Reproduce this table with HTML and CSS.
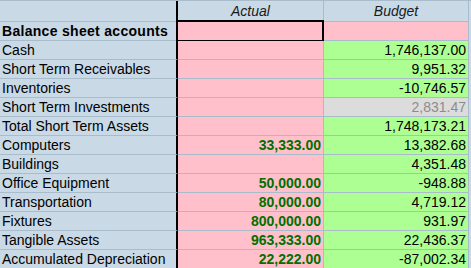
FILE: index.html
```html
<!DOCTYPE html>
<html>
<head>
<meta charset="utf-8">
<link rel="stylesheet" href="styles.css">
</head>
<body>
<div class="sheet">
  <div class="row head">
    <div class="cell label"></div>
    <div class="cell colhead">Actual</div>
    <div class="cell colhead">Budget</div>
  </div>
  <div class="row">
    <div class="cell label bold">Balance sheet accounts</div>
    <div class="cell actual selected"></div>
    <div class="cell budget pinkcell"></div>
  </div>
  <div class="row">
    <div class="cell label">Cash</div>
    <div class="cell actual"></div>
    <div class="cell budget">1,746,137.00</div>
  </div>
  <div class="row">
    <div class="cell label">Short Term Receivables</div>
    <div class="cell actual"></div>
    <div class="cell budget">9,951.32</div>
  </div>
  <div class="row">
    <div class="cell label">Inventories</div>
    <div class="cell actual"></div>
    <div class="cell budget">-10,746.57</div>
  </div>
  <div class="row">
    <div class="cell label">Short Term Investments</div>
    <div class="cell actual"></div>
    <div class="cell budget disabled">2,831.47</div>
  </div>
  <div class="row">
    <div class="cell label">Total Short Term Assets</div>
    <div class="cell actual"></div>
    <div class="cell budget">1,748,173.21</div>
  </div>
  <div class="row">
    <div class="cell label">Computers</div>
    <div class="cell actual">33,333.00</div>
    <div class="cell budget">13,382.68</div>
  </div>
  <div class="row">
    <div class="cell label">Buildings</div>
    <div class="cell actual"></div>
    <div class="cell budget">4,351.48</div>
  </div>
  <div class="row">
    <div class="cell label">Office Equipment</div>
    <div class="cell actual">50,000.00</div>
    <div class="cell budget">-948.88</div>
  </div>
  <div class="row">
    <div class="cell label">Transportation</div>
    <div class="cell actual">80,000.00</div>
    <div class="cell budget">4,719.12</div>
  </div>
  <div class="row">
    <div class="cell label">Fixtures</div>
    <div class="cell actual">800,000.00</div>
    <div class="cell budget">931.97</div>
  </div>
  <div class="row">
    <div class="cell label">Tangible Assets</div>
    <div class="cell actual">963,333.00</div>
    <div class="cell budget">22,436.37</div>
  </div>
  <div class="row">
    <div class="cell label">Accumulated Depreciation</div>
    <div class="cell actual">22,222.00</div>
    <div class="cell budget">-87,002.34</div>
  </div>
</div>
</body>
</html>
```

FILE: styles.css
```css
html, body {
  margin: 0;
  padding: 0;
  background: #c9d9e5;
}
.sheet {
  width: 471px;
  height: 268px;
  overflow: hidden;
  font-family: "Liberation Sans", Arial, sans-serif;
  font-size: 14px;
  color: #000;
  border-top: 1px solid #a9bccc;
}
.row {
  display: grid;
  grid-template-columns: 178px 146px 145px 1fr;
  height: 19px;
}
.row.head {
  height: 21px;
}
.cell {
  box-sizing: border-box;
  border-bottom: 1px solid #a9bccc;
  border-right: 1px solid #a9bccc;
  line-height: 18px;
  white-space: nowrap;
  overflow: hidden;
}
.head .cell {
  line-height: 20px;
}
.label {
  background: #c9d9e5;
  border-right: 2px solid #000;
  padding-left: 2px;
}
.bold {
  font-weight: bold;
  letter-spacing: 0.3px;
}
.colhead {
  background: #c9d9e5;
  text-align: center;
  font-style: italic;
  color: #1a1a1a;
}
.actual {
  background: #ffc0cb;
  text-align: right;
  padding-right: 2px;
  color: #007000;
  font-weight: bold;
  position: relative;
  overflow: visible;
}
.budget {
  background: #adff93;
  text-align: right;
  padding-right: 2px;
}
.pinkcell {
  background: #ffc0cb;
}
.disabled {
  background: #dcdcdc;
  color: #8c8c8c;
}
.selected::after {
  content: "";
  position: absolute;
  left: -2px;
  top: -2px;
  right: -1px;
  bottom: -2px;
  border: 2px solid #000;
}
```
